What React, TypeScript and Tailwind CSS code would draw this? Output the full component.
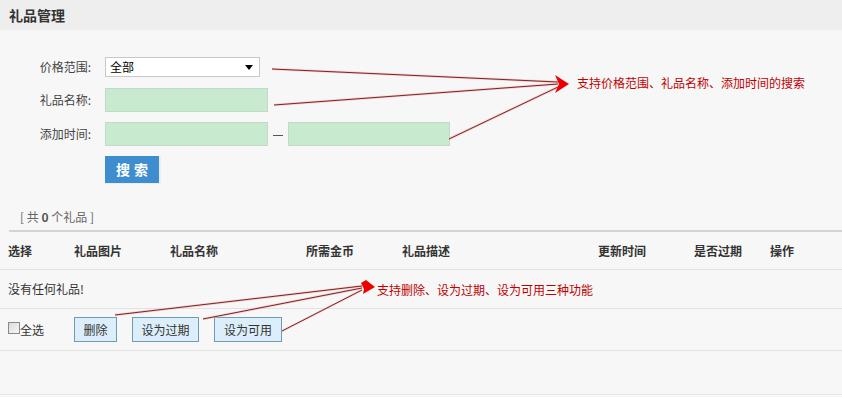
import React from "react";

const font = { fontFamily: '"Noto Sans CJK SC", "Noto Sans", sans-serif' };

const cols = [
  { t: "选择", w: "w-[66px]" },
  { t: "礼品图片", w: "w-[96px]" },
  { t: "礼品名称", w: "w-[136px]" },
  { t: "所需金币", w: "w-[96px]" },
  { t: "礼品描述", w: "w-[196px]" },
  { t: "更新时间", w: "w-[96px]" },
  { t: "是否过期", w: "w-[76px]" },
  { t: "操作", w: "w-[60px]" },
];

function Label({ children }: { children: React.ReactNode }) {
  return <div className="w-[92px] text-right pr-[1px] text-[12px] text-[#444]">{children}</div>;
}

export default function App() {
  return (
    <div className="relative w-[842px] h-[397px] overflow-hidden bg-[#f7f7f7] text-[#333]" style={font}>
      <div className="h-[30px] bg-[#eeeeee] pl-[9px] flex items-center text-[14px] font-bold text-[#333]">
        礼品管理
      </div>

      <div className="flex flex-col pt-[27px]">
        <div className="flex items-center h-[20px]">
          <Label>价格范围:</Label>
          <div className="ml-[13px] w-[155px] h-[20px] bg-white border border-[#c8c8c8] flex items-center justify-between pl-[4px] pr-[6px] text-[12px] text-black">
            <span>全部</span>
            <span className="w-0 h-0 border-l-[4px] border-r-[4px] border-t-[5px] border-l-transparent border-r-transparent border-t-black" />
          </div>
        </div>
        <div className="flex items-center h-[24px] mt-[11px]">
          <Label>礼品名称:</Label>
          <div className="ml-[13px] w-[163px] h-[24px] bg-[#c8ebcf] border border-[#c4d8c8]" />
        </div>
        <div className="flex items-center h-[24px] mt-[10px]">
          <Label>添加时间:</Label>
          <div className="ml-[13px] w-[163px] h-[24px] bg-[#c8ebcf] border border-[#c4d8c8]" />
          <div className="ml-[5px] w-[10px] h-[1px] bg-[#555] mt-[3px]" />
          <div className="ml-[5px] w-[162px] h-[24px] bg-[#c8ebcf] border border-[#c4d8c8]" />
        </div>
        <div className="flex h-[28px] mt-[10px] pl-[105px]">
          <div className="w-[56px] h-[28px] bg-[#3e8ecf] border-r-[2px] border-b-[1px] border-[#e8eef3] flex items-center justify-center text-white font-bold text-[14px] tracking-[4px] pl-[4px]">
            搜索
          </div>
        </div>
      </div>

      <div className="mt-[26px] pl-[20px] text-[12px] text-[#666] h-[14px] leading-[14px]">
        [ 共 <b className="text-[#555]">0</b> 个礼品 ]
      </div>

      <div className="mt-[6px] ml-[9px] h-[2px] bg-[#d4d4d4]" />
      <div className="flex items-center h-[38px] border-b border-[#e2e2e2] pl-[8px] text-[12px] font-bold text-[#333]">
        {cols.map((c) => (
          <div key={c.t} className={c.w}>
            {c.t}
          </div>
        ))}
      </div>
      <div className="flex items-center h-[39px] border-b border-[#e2e2e2] pl-[8px] text-[12px] text-[#333]">
        没有任何礼品!
      </div>
      <div className="flex items-center h-[42px] border-b border-[#e2e2e2] pl-[8px] text-[12px] text-[#333]">
        <div className="w-[66px] flex items-center">
          <span className="w-[12px] h-[12px] border border-[#8a8a8a] bg-gradient-to-br from-[#dcdcdc] to-[#f6f6f6] mt-[-4px]" />
          <span>全选</span>
        </div>
        <div className="flex gap-[15px]">
          <div className="w-[43px] h-[25px] bg-[#dbeef9] border border-[#6e9db2] flex items-center justify-center">删除</div>
          <div className="w-[67px] h-[25px] bg-[#dbeef9] border border-[#6e9db2] flex items-center justify-center">设为过期</div>
          <div className="w-[68px] h-[25px] bg-[#dbeef9] border border-[#6e9db2] flex items-center justify-center">设为可用</div>
        </div>
      </div>
      <div className="h-[44px] border-b border-[#e6e6e6]" />

      <svg className="absolute left-0 top-0 pointer-events-none" width="842" height="397">
        <g stroke="#f5b5b5" strokeWidth="2.5" fill="none" opacity="0.6">
          <line x1="272" y1="69" x2="558" y2="82" />
          <line x1="274" y1="105" x2="558" y2="84" />
          <line x1="449" y1="139" x2="558" y2="87" />
          <line x1="115" y1="315" x2="362" y2="286" />
          <line x1="203" y1="319" x2="362" y2="288" />
          <line x1="282" y1="331" x2="362" y2="290" />
        </g>
        <g stroke="#7a2424" strokeWidth="1" fill="none">
          <line x1="272" y1="69" x2="558" y2="82" />
          <line x1="274" y1="105" x2="558" y2="84" />
          <line x1="449" y1="139" x2="558" y2="87" />
          <line x1="115" y1="315" x2="362" y2="286" />
          <line x1="203" y1="319" x2="362" y2="288" />
          <line x1="282" y1="331" x2="362" y2="290" />
        </g>
        <polygon points="555,75 569,84 555,93 559,84" fill="#ee0000" />
        <polygon points="361,283 366,280 375,287 363,294 364,289" fill="#ee0000" />
      </svg>

      <div className="absolute left-[577px] top-[75px] text-[12px] text-[#c00000] leading-[16px]">
        支持价格范围、礼品名称、添加时间的搜索
      </div>
      <div className="absolute left-[377px] top-[282px] text-[12px] text-[#c00000] leading-[16px]">
        支持删除、设为过期、设为可用三种功能
      </div>
    </div>
  );
}
